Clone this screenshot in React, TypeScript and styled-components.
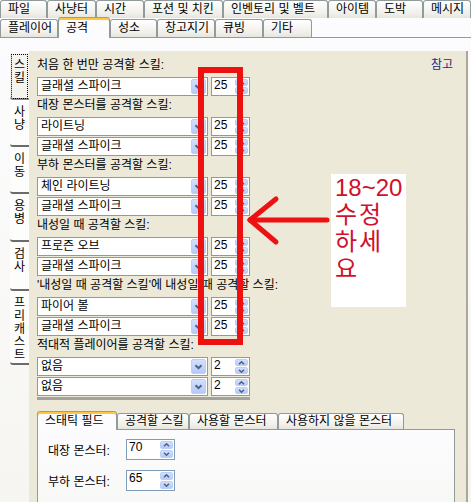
import React from "react";
import styled, { createGlobalStyle } from "styled-components";

const GlobalStyle = createGlobalStyle`
  body {
    margin: 0;
    background: #fff;
    font-family: "Liberation Sans", "Noto Sans CJK KR", sans-serif;
    font-size: 12px;
    color: #000;
  }
`;

const Window = styled.div`
  position: relative;
  width: 471px;
  height: 502px;
  overflow: hidden;
  background: #fcfcfe;
`;

const TabRow = styled.div<{ $h: number }>`
  display: flex;
  align-items: flex-end;
  height: ${(p) => p.$h}px;
`;

const Tab = styled.div<{ $w: number; $active?: boolean; $h?: number }>`
  position: relative;
  box-sizing: border-box;
  width: ${(p) => p.$w}px;
  height: ${(p) => (p.$active ? (p.$h || 18) + 3 : p.$h || 18)}px;
  margin-bottom: ${(p) => (p.$active ? -1 : 0)}px;
  z-index: ${(p) => (p.$active ? 2 : 1)};
  padding-left: 7px;
  line-height: ${(p) => (p.$h || 18) - 2}px;
  white-space: nowrap;
  border: 1px solid #919b9c;
  border-bottom: none;
  border-radius: 3px 3px 0 0;
  background: ${(p) =>
    p.$active ? "#fcfcfe" : "linear-gradient(#ffffff, #f1f0ea 70%, #e6e5dd)"};
  ${(p) =>
    p.$active &&
    `
    border-top: 1px solid #e68b2c;
    box-shadow: inset 0 2px 0 #ffc73c;
    padding-top: 2px;
  `}
`;

const TabPage = styled.div`
  display: flex;
  border-top: 1px solid #919b9c;
  padding: 13px 3px 0 10px;
  background: linear-gradient(#fcfcfe, #f6f5f0);
  height: 480px;
`;

const SideTabs = styled.div`
  display: flex;
  flex-direction: column;
  width: 19px;
  padding-top: 2px;
`;

const SideTab = styled.div<{ $h: number; $active?: boolean }>`
  box-sizing: border-box;
  display: flex;
  flex-direction: column;
  align-items: center;
  height: ${(p) => p.$h}px;
  padding-top: 6px;
  line-height: 13px;
  background: ${(p) => (p.$active ? "#f4f3ee" : "#fdfdfb")};
  border-bottom: 2px solid #6b6b6b;
  border-bottom-left-radius: 3px;
  ${(p) =>
    p.$active &&
    `
    outline: 1px dotted #000;
    outline-offset: -2px;
    border-bottom-color: #8c8c8c;
  `}
`;

const Panel = styled.div`
  position: relative;
  flex: 1;
  box-sizing: border-box;
  background: #ece9d8;
  border-right: 2px solid #aca899;
  padding: 6px 0 0 8px;
`;

const HeaderRow = styled.div`
  display: flex;
  justify-content: space-between;
  padding-right: 13px;
`;

const Label = styled.div`
  height: 20px;
  line-height: 17px;
  white-space: nowrap;
`;

const RefLink = styled.div`
  color: #1c2b86;
  line-height: 17px;
`;

const FieldRow = styled.div`
  display: flex;
  gap: 3px;
  margin-bottom: 1px;
`;

const Combo = styled.div`
  display: flex;
  box-sizing: border-box;
  width: 171px;
  height: 19px;
  border: 1px solid #7f9db9;
  background: #fff;
`;

const ComboText = styled.div`
  flex: 1;
  padding-left: 3px;
  line-height: 16px;
  white-space: nowrap;
`;

const ComboBtn = styled.div`
  display: flex;
  align-items: center;
  justify-content: center;
  box-sizing: border-box;
  width: 15px;
  margin: 1px;
  border: 1px solid #bccff6;
  border-radius: 2px;
  background: linear-gradient(#d3e0fd, #b6caf7);
`;

const Spin = styled.div<{ $w: number; $h: number }>`
  display: flex;
  box-sizing: border-box;
  width: ${(p) => p.$w}px;
  height: ${(p) => p.$h}px;
  border: 1px solid #7f9db9;
  background: #fff;
`;

const SpinText = styled.div`
  flex: 1;
  padding-left: 2px;
  line-height: 14px;
`;

const SpinBtns = styled.div`
  display: flex;
  flex-direction: column;
  width: 15px;
  padding: 1px;
  gap: 1px;
  box-sizing: border-box;
`;

const SpinBtn = styled.div`
  flex: 1;
  display: flex;
  align-items: center;
  justify-content: center;
  border: 1px solid #bccff6;
  border-radius: 2px;
  background: linear-gradient(#d3e0fd, #b6caf7);
`;

const Divider = styled.div`
  width: 213px;
  height: 3px;
  background: #a3a29c;
`;

const BottomTabs = styled.div`
  width: 418px;
  margin-top: 10px;
`;

const BottomPage = styled.div`
  box-sizing: border-box;
  height: 90px;
  border: 1px solid #919b9c;
  background: linear-gradient(#fcfcfe, #f7f7f4);
  padding: 9px 0 0 10px;
`;

const PageRow = styled.div`
  display: flex;
  align-items: center;
  height: 21px;
  margin-bottom: 10px;
`;

const PageLabel = styled.div`
  width: 78px;
`;

const RedBox = styled.div`
  position: absolute;
  left: 198px;
  top: 67px;
  width: 45px;
  height: 278px;
  box-sizing: border-box;
  border: 6px solid #ee1111;
`;

const ArrowSvg = styled.svg`
  position: absolute;
  left: 245px;
  top: 195px;
`;

const Note = styled.div`
  position: absolute;
  left: 331px;
  top: 174px;
  width: 75px;
  height: 133px;
  box-sizing: border-box;
  background: #fff;
  color: #d0102c;
  font-size: 24px;
  line-height: 27px;
  padding-left: 4px;
  white-space: nowrap;
`;

const NoteLine = styled.div<{ $sp?: number }>`
  letter-spacing: ${(p) => p.$sp || 0}px;
`;

const Chevron = () => (
  <svg width="9" height="6" viewBox="0 0 9 6">
    <path d="M1.5 1.2 L4.5 4.2 L7.5 1.2" stroke="#4d6185" strokeWidth="2" fill="none" />
  </svg>
);

const SmallArrow = ({ up }: { up?: boolean }) => (
  <svg width="7" height="4" viewBox="0 0 7 4">
    <path
      d={up ? "M1 3.3 L3.5 0.8 L6 3.3" : "M1 0.7 L3.5 3.2 L6 0.7"}
      stroke="#4d6185"
      strokeWidth="1.5"
      fill="none"
    />
  </svg>
);

const SpinEdit = ({ value, w, h }: { value: string; w: number; h: number }) => (
  <Spin $w={w} $h={h}>
    <SpinText>{value}</SpinText>
    <SpinBtns>
      <SpinBtn>
        <SmallArrow up />
      </SpinBtn>
      <SpinBtn>
        <SmallArrow />
      </SpinBtn>
    </SpinBtns>
  </Spin>
);

const topRow1 = [
  ["파일", 47],
  ["사냥터", 49],
  ["시간", 48],
  ["포션 및 치킨", 79],
  ["인벤토리 및 벨트", 105],
  ["아이템", 48],
  ["도박", 47],
  ["메시지", 48],
] as const;

const topRow2 = [
  ["플레이어", 58],
  ["공격", 52],
  ["성소", 47],
  ["창고지기", 58],
  ["큐빙", 48],
  ["기타", 49],
] as const;

const sideTabs = [
  ["스킬", 47],
  ["사냥", 47],
  ["이동", 47],
  ["용병", 48],
  ["검사", 49],
  ["프리캐스트", 74],
] as const;

const groups = [
  { label: "처음 한 번만 공격할 스킬:", rows: [["글래셜 스파이크", "25"]] },
  { label: "대장 몬스터를 공격할 스킬:", rows: [["라이트닝", "25"], ["글래셜 스파이크", "25"]] },
  { label: "부하 몬스터를 공격할 스킬:", rows: [["체인 라이트닝", "25"], ["글래셜 스파이크", "25"]] },
  { label: "내성일 때 공격할 스킬:", rows: [["프로즌 오브", "25"], ["글래셜 스파이크", "25"]] },
  { label: "'내성일 때 공격할 스킬'에 내성일 때 공격할 스킬:", rows: [["파이어 볼", "25"], ["글래셜 스파이크", "25"]] },
  { label: "적대적 플레이어를 공격할 스킬:", rows: [["없음", "2"], ["없음", "2"]] },
];

const bottomTabs = [
  ["스태틱 필드", 80],
  ["공격할 스킬", 72],
  ["사용할 몬스터", 89],
  ["사용하지 않을 몬스터", 126],
] as const;

export default function App() {
  return (
    <Window>
      <GlobalStyle />
      <TabRow $h={18}>
        {topRow1.map(([t, w]) => (
          <Tab key={t} $w={w}>
            {t}
          </Tab>
        ))}
      </TabRow>
      <TabRow $h={19}>
        {topRow2.map(([t, w]) => (
          <Tab key={t} $w={w} $active={t === "공격"}>
            {t}
          </Tab>
        ))}
      </TabRow>
      <TabPage>
        <SideTabs>
          {sideTabs.map(([t, h]) => (
            <SideTab key={t} $h={h} $active={t === "스킬"}>
              {t.split("").map((c, i) => (
                <span key={i}>{c}</span>
              ))}
            </SideTab>
          ))}
        </SideTabs>
        <Panel>
          {groups.map((g, i) => (
            <div key={i}>
              {i === 0 ? (
                <HeaderRow>
                  <Label>{g.label}</Label>
                  <RefLink>참고</RefLink>
                </HeaderRow>
              ) : (
                <Label>{g.label}</Label>
              )}
              {g.rows.map(([name, val], j) => (
                <FieldRow key={j}>
                  <Combo>
                    <ComboText>{name}</ComboText>
                    <ComboBtn>
                      <Chevron />
                    </ComboBtn>
                  </Combo>
                  <SpinEdit value={val} w={39} h={19} />
                </FieldRow>
              ))}
            </div>
          ))}
          <Divider />
          <BottomTabs>
            <TabRow $h={19}>
              {bottomTabs.map(([t, w], i) => (
                <Tab key={t} $w={w} $h={16} $active={i === 0}>
                  {t}
                </Tab>
              ))}
            </TabRow>
            <BottomPage>
              <PageRow>
                <PageLabel>대장 몬스터:</PageLabel>
                <SpinEdit value="70" w={49} h={21} />
              </PageRow>
              <PageRow>
                <PageLabel>부하 몬스터:</PageLabel>
                <SpinEdit value="65" w={49} h={21} />
              </PageRow>
            </BottomPage>
          </BottomTabs>
        </Panel>
      </TabPage>
      <RedBox />
      <ArrowSvg width="90" height="52" viewBox="0 0 90 52">
        <g stroke="#ee1111" strokeWidth="5" strokeLinecap="round" fill="none">
          <path d="M5 25 L82 25" />
          <path d="M5 25 L31 4" />
          <path d="M5 25 L31 47" />
        </g>
      </ArrowSvg>
      <Note>
        <NoteLine>18~20</NoteLine>
        <NoteLine $sp={2}>수정</NoteLine>
        <NoteLine $sp={2}>하세</NoteLine>
        <NoteLine>요</NoteLine>
      </Note>
    </Window>
  );
}
